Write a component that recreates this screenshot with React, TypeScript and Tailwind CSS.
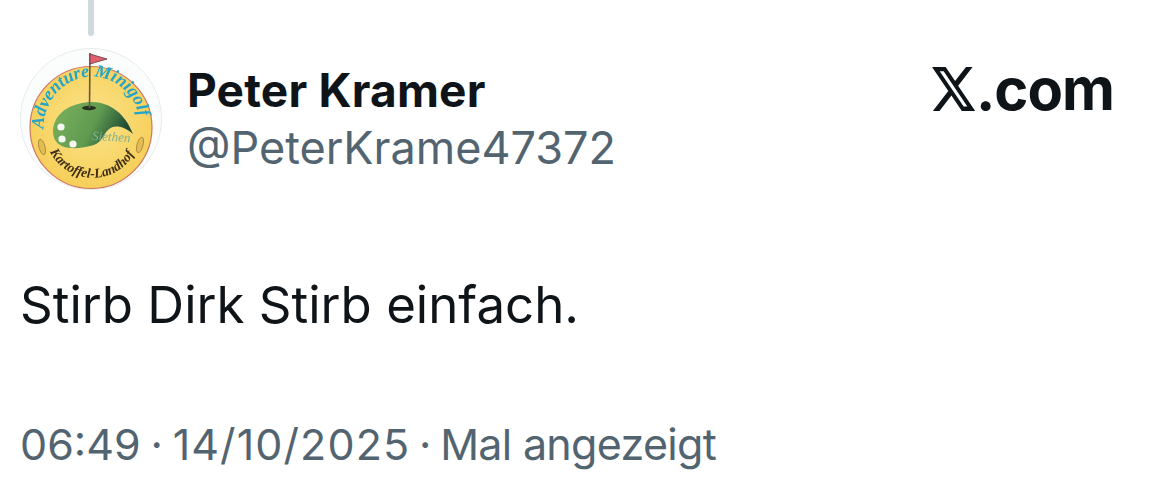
import React from 'react';

function Avatar() {
  return (
    <svg viewBox="0 0 142 142" className="w-[142px] h-[142px] shrink-0" style={{ filter: 'blur(0.4px)' }}>
      <defs>
        <radialGradient id="sand" cx="50%" cy="45%" r="60%">
          <stop offset="0%" stopColor="#fbe48a" />
          <stop offset="100%" stopColor="#f6cd55" />
        </radialGradient>
        <linearGradient id="green" x1="0" y1="0" x2="1" y2="0.3">
          <stop offset="0%" stopColor="#7db35e" />
          <stop offset="60%" stopColor="#5f9a50" />
          <stop offset="100%" stopColor="#1f4a33" />
        </linearGradient>
        <path id="topArc" d="M 24 86 A 47 50 0 1 1 120 74" />
        <path id="bottomArc" d="M 30 104 A 48 48 0 0 0 114 106" />
      </defs>
      <circle cx="71" cy="71" r="70.5" fill="#fbfdfd" stroke="#e6ebee" strokeWidth="1" />
      <circle cx="71" cy="79.5" r="61" fill="url(#sand)" stroke="#d0765f" strokeWidth="1.2" />
      <path
        d="M 33 84 C 33 68 46 58 62 55 C 84 50 104 62 113 86 C 104 78 94 76 88 82 C 82 88 82 96 70 98 C 58 101 34 104 33 84 Z"
        fill="url(#green)"
      />
      <text fontFamily="'Liberation Serif', serif" fontStyle="italic" fontWeight="700" fontSize="18" fill="#22a5c9">
        <textPath href="#topArc" startOffset="50%" textAnchor="middle">Adventure Minigolf</textPath>
      </text>
      <text fontFamily="'Liberation Serif', serif" fontStyle="italic" fontWeight="700" fontSize="13.5" fill="#3d2d16">
        <textPath href="#bottomArc" startOffset="50%" textAnchor="middle">Kartoffel-Landhof</textPath>
      </text>
      <text x="72" y="92" fontFamily="'Liberation Serif', serif" fontStyle="italic" fontSize="13" fill="#7fb08f" transform="rotate(3 72 92)">Siethen</text>
      <ellipse cx="69" cy="60" rx="7" ry="2.2" fill="#26301f" />
      <line x1="69.5" y1="60" x2="70" y2="5" stroke="#6b5a3c" strokeWidth="1.6" />
      <path d="M 70 6 L 87 11 L 70 16 Z" fill="#e0616d" stroke="#5a3a3e" strokeWidth="0.8" />
      <circle cx="41" cy="79" r="3.6" fill="#f6f7ef" />
      <circle cx="42" cy="91" r="3.6" fill="#f6f7ef" />
      <circle cx="53" cy="96" r="3.6" fill="#f6f7ef" />
      <ellipse cx="22" cy="99" rx="3" ry="8" fill="#e2bc55" stroke="#9b7a33" strokeWidth="0.7" transform="rotate(-15 22 99)" />
      <ellipse cx="120" cy="97" rx="3" ry="8" fill="#e2bc55" stroke="#9b7a33" strokeWidth="0.7" transform="rotate(15 120 97)" />
    </svg>
  );
}

function XLogo() {
  return (
    <svg viewBox="1.25 2.25 21.5 19.5" className="w-[43px] h-[44px]" preserveAspectRatio="none" fill="#0f1419">
      <path d="M18.244 2.25h3.308l-7.227 8.26 8.502 11.24H16.17l-5.214-6.817L4.99 21.75H1.68l7.73-8.835L1.254 2.25H8.08l4.713 6.231zm-1.161 17.52h1.833L7.084 4.126H5.117z" />
    </svg>
  );
}

export default function App() {
  return (
    <div className="w-[1172px] h-[498px] bg-white overflow-hidden font-['Inter',sans-serif] text-[#0f1419]">
      <div className="ml-[88px] w-[6px] h-[36px] rounded-b-full bg-[#cfd9de]" />

      <div className="mt-[12px] pl-[20px] pr-[58px] flex items-start">
        <Avatar />
        <div className="ml-[25px] pt-[16px]">
          <div className="text-[46px] leading-[52px] font-bold tracking-[0.2px]">Peter Kramer</div>
          <div className="mt-[6px] text-[45px] leading-[52px] text-[#536471]">@PeterKrame47372</div>
        </div>
        <div className="ml-auto mt-[19px] flex items-end">
          <XLogo />
          <span className="ml-[1px] text-[58px] leading-[44px] font-bold tracking-[-1px]">.com</span>
        </div>
      </div>

      <div className="mt-[85px] pl-[20px] text-[51px] leading-[60px]">Stirb Dirk Stirb einfach.</div>

      <div className="mt-[83px] pl-[20px] flex text-[43px] leading-[52px] text-[#536471]">
        <span>06:49</span>
        <span className="w-[32px] text-center">·</span>
        <span className="tracking-[1.1px]">14/10/2025</span>
        <span className="w-[30px] text-center">·</span>
        <span className="tracking-[-0.7px]">Mal angezeigt</span>
      </div>
    </div>
  );
}
